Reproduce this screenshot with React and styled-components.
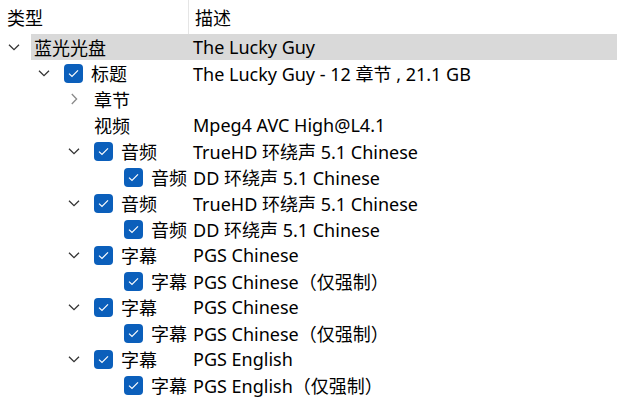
import styled, { createGlobalStyle } from 'styled-components'

const GlobalStyle = createGlobalStyle`
  html, body {
    margin: 0;
    padding: 0;
    background: #ffffff;
  }
  body {
    font-family: "Noto Sans", "Noto Sans CJK SC", sans-serif;
    color: #000;
  }
`

const TreeView = styled.div`
  width: 617px;
  height: 400px;
  overflow: hidden;
  background: #fff;
  font-size: 18px;
`

const Header = styled.div`
  height: 34px;
  display: grid;
  grid-template-columns: 188px 1fr;
`

const HeaderCell = styled.div`
  display: flex;
  align-items: center;
  padding-left: ${p => (p.$first ? '7px' : '6px')};
  border-left: ${p => (p.$first ? 'none' : '1px solid #e5e5e5')};
`

const Body = styled.div`
  border-left: 1px solid #a0a0a0;
  margin-left: -1px;
  height: 366px;
`

const Row = styled.div`
  height: 26px;
  display: flex;
`

const Toggle = styled.div`
  flex: none;
  width: ${p => p.$level * 30 + 31}px;
  display: flex;
  align-items: center;
  justify-content: flex-end;
`

const ChevronSlot = styled.div`
  width: 31px;
  height: 26px;
  display: flex;
  align-items: center;
  justify-content: center;
  padding-right: 3px;
  box-sizing: border-box;
`

const Content = styled.div`
  flex: 1;
  display: grid;
  grid-template-columns: ${p => 157 - p.$level * 30}px 1fr;
  background: ${p => (p.$selected ? '#d9d9d9' : 'transparent')};
`

const NameCell = styled.div`
  display: flex;
  align-items: center;
  gap: 8px;
  padding-left: 3px;
  white-space: nowrap;
`

const DescCell = styled.div`
  display: flex;
  align-items: center;
  padding-left: 5px;
  white-space: nowrap;
`

const Box = styled.span`
  width: 19px;
  height: 19px;
  border-radius: 4px;
  background: #0b5fbb;
  display: flex;
  align-items: center;
  justify-content: center;
  flex: none;
`

const Chevron = ({ open }) => (
  <svg width="12" height="12" viewBox="0 0 12 12">
    {open ? (
      <path d="M1 3.8 L6 8.6 L11 3.8" fill="none" stroke="#333" strokeWidth="1.3" />
    ) : (
      <path d="M3.8 1 L8.6 6 L3.8 11" fill="none" stroke="#8a8a8a" strokeWidth="1.3" />
    )}
  </svg>
)

const Check = () => (
  <Box>
    <svg width="11" height="9" viewBox="0 0 11 9">
      <path d="M1 4.6 L4 7.4 L10 1.4" fill="none" stroke="#fff" strokeWidth="1.2" />
    </svg>
  </Box>
)

const rows = [
  { level: 0, toggle: 'open', name: '蓝光光盘', desc: 'The Lucky Guy', selected: true },
  { level: 1, toggle: 'open', check: true, name: '标题', desc: 'The Lucky Guy - 12 章节 , 21.1 GB' },
  { level: 2, toggle: 'closed', name: '章节', desc: '' },
  { level: 2, name: '视频', desc: 'Mpeg4 AVC High@L4.1' },
  { level: 2, toggle: 'open', check: true, name: '音频', desc: 'TrueHD 环绕声 5.1 Chinese' },
  { level: 3, check: true, name: '音频', desc: 'DD 环绕声 5.1 Chinese' },
  { level: 2, toggle: 'open', check: true, name: '音频', desc: 'TrueHD 环绕声 5.1 Chinese' },
  { level: 3, check: true, name: '音频', desc: 'DD 环绕声 5.1 Chinese' },
  { level: 2, toggle: 'open', check: true, name: '字幕', desc: 'PGS Chinese' },
  { level: 3, check: true, name: '字幕', desc: 'PGS Chinese（仅强制）' },
  { level: 2, toggle: 'open', check: true, name: '字幕', desc: 'PGS Chinese' },
  { level: 3, check: true, name: '字幕', desc: 'PGS Chinese（仅强制）' },
  { level: 2, toggle: 'open', check: true, name: '字幕', desc: 'PGS English' },
  { level: 3, check: true, name: '字幕', desc: 'PGS English（仅强制）' },
]

function App() {
  return (
    <>
      <GlobalStyle />
      <TreeView>
        <Header>
          <HeaderCell $first>类型</HeaderCell>
          <HeaderCell>描述</HeaderCell>
        </Header>
        <Body>
          {rows.map((r, i) => (
            <Row key={i}>
              <Toggle $level={r.level}>
                <ChevronSlot>{r.toggle && <Chevron open={r.toggle === 'open'} />}</ChevronSlot>
              </Toggle>
              <Content $level={r.level} $selected={r.selected}>
                <NameCell>
                  {r.check && <Check />}
                  {r.name}
                </NameCell>
                <DescCell>{r.desc}</DescCell>
              </Content>
            </Row>
          ))}
        </Body>
      </TreeView>
    </>
  )
}

export default App
